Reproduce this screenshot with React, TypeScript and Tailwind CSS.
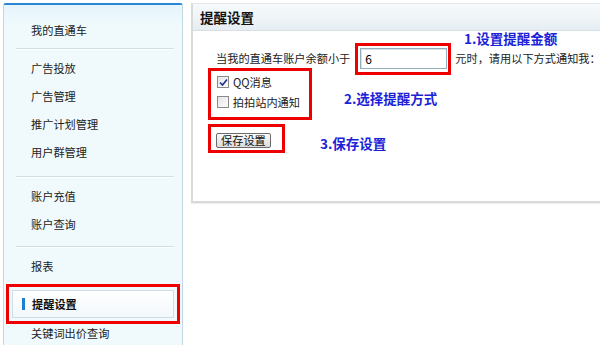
const font = { fontFamily: '"Noto Sans CJK SC", "Noto Sans", sans-serif' };

function Sep({ className = '' }: { className?: string }) {
  return <div className={`ml-[12px] mr-[8px] h-[2px] border-t border-[#cddfe7] bg-white ${className}`} />;
}

function Item({ label, className = '' }: { label: string; className?: string }) {
  return (
    <div className={`flex h-[28px] items-center pl-[27px] text-[11.2px] text-[#222] ${className}`}>{label}</div>
  );
}

function Box({ checked }: { checked?: boolean }) {
  return (
    <span className="flex h-[12px] w-[12px] items-center justify-center border border-[#8a8a8a] bg-gradient-to-br from-[#e4e4e4] to-white">
      {checked && (
        <svg width="9" height="9" viewBox="0 0 9 9">
          <path d="M1 4.5 L3.5 7 L8 1.5" fill="none" stroke="#1d2f8f" strokeWidth="1.6" />
        </svg>
      )}
    </span>
  );
}

export default function App() {
  return (
    <div className="relative flex h-[345px] w-[600px] items-start overflow-hidden bg-white pl-[3px] pt-[3px]" style={font}>
      {/* sidebar */}
      <div className="h-[360px] w-[180px] shrink-0 rounded-t-[3px] border-x border-t-2 border-[#c3d7e2] border-t-[#2a86d2]">
        <div className="h-full pt-[11px]" style={{ background: 'linear-gradient(#e6f4fb, #f0fafd 20px)' }}>
          <Item label="我的直通车" />
          <Sep className="mt-[4px]" />
          <div className="mt-[4px]">
            <Item label="广告投放" />
            <Item label="广告管理" />
            <Item label="推广计划管理" />
            <Item label="用户群管理" />
          </div>
          <Sep className="mt-[10px]" />
          <div className="mt-[4px]">
            <Item label="账户充值" />
            <Item label="账户查询" />
          </div>
          <Sep className="mt-[8px]" />
          <Item label="报表" className="mt-[4px]" />
          <div className="relative ml-[8px] mr-[8px] mt-[10px]">
            <div className="flex h-[28px] items-center border border-[#cfdde6] bg-gradient-to-b from-white to-[#f2f8fb] pl-[9px] text-[11.2px] font-bold text-[#111]">
              <span className="mr-[7px] h-[12px] w-[3px] bg-[#1f7fd0]" />
              提醒设置
            </div>
            <div className="absolute -bottom-[6px] -left-[6px] -right-[6px] -top-[6px] border-[3.5px] border-[#ee0000]" />
          </div>
          <Item label="关键词出价查询" className="mt-[1px]" />
        </div>
      </div>

      {/* main panel */}
      <div className="ml-[8px] w-[430px] shrink-0 border-b-2 border-l-2 border-t border-[#dadada] border-t-[#e2e8ec] shadow-[0_1px_0_#eee]">
        <div className="flex h-[27px] items-center border-b border-[#d8e0e5] bg-gradient-to-b from-[#f7fafc] to-[#e6eef3] pl-[7px] text-[13.5px] font-bold text-[#111]">
          提醒设置
        </div>
        <div className="relative h-[170px] pl-[23px] pt-[17px] text-[11.2px] text-[#222]">
          <div className="flex h-[21px] items-center">
            <span>当我的直通车账户余额小于</span>
            <div className="relative ml-[10px]">
              <div className="flex h-[21px] w-[87px] items-center border border-[#93aebd] pl-[4px] text-[12px] text-black shadow-[inset_1px_1px_0_#d9e3e8]">
                6
              </div>
              <div className="absolute -bottom-[6px] -left-[5px] -right-[4px] -top-[5px] border-[3.5px] border-[#ee0000]" />
            </div>
            <span className="ml-[8px] whitespace-nowrap">元时，请用以下方式通知我：</span>
          </div>

          <div className="relative mt-[3px] w-[84px]">
            <div className="flex h-[20px] items-center gap-[4px] pl-[1px]">
              <Box checked />
              <span>QQ消息</span>
            </div>
            <div className="flex h-[20px] items-center gap-[4px] pl-[1px]">
              <Box />
              <span className="whitespace-nowrap">拍拍站内通知</span>
            </div>
            <div className="absolute -bottom-[8px] -left-[8px] -right-[12px] -top-[4px] border-[3.5px] border-[#ee0000]" />
          </div>

          <div className="relative mt-[21px] w-fit">
            <button className="flex h-[15px] items-center rounded-[2px] border border-[#6b6b6b] bg-gradient-to-b from-[#fbfbfb] to-[#dcdcdc] px-[4px] text-[11.2px] leading-none text-[#111]">
              保存设置
            </button>
            <div className="absolute -bottom-[5px] -left-[8px] -right-[14px] -top-[9px] border-[3.5px] border-[#ee0000]" />
          </div>

          <div className="absolute left-[271px] top-[-1px] text-[13.5px] font-bold leading-[16px] text-[#1a22d8]">1.设置提醒金额</div>
          <div className="absolute left-[151px] top-[59px] text-[13.5px] font-bold leading-[16px] text-[#1a22d8]">2.选择提醒方式</div>
          <div className="absolute left-[127px] top-[104px] text-[13.5px] font-bold leading-[16px] text-[#1a22d8]">3.保存设置</div>
        </div>
      </div>
    </div>
  );
}
